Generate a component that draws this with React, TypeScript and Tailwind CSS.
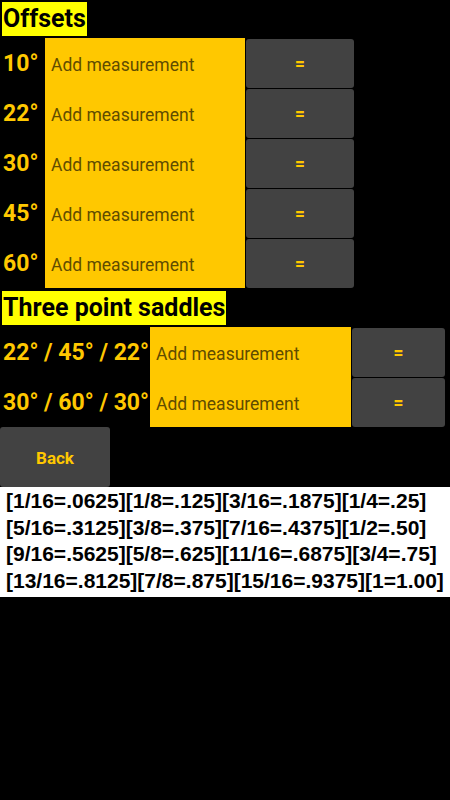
import React from 'react';

const offsets = ['10°', '22°', '30°', '45°', '60°'];
const saddles = ['22° / 45° / 22°', '30° / 60° / 30°'];

const fractions = [
  '[1/16=.0625][1/8=.125][3/16=.1875][1/4=.25]',
  '[5/16=.3125][3/8=.375][7/16=.4375][1/2=.50]',
  '[9/16=.5625][5/8=.625][11/16=.6875][3/4=.75]',
  '[13/16=.8125][7/8=.875][15/16=.9375][1=1.00]',
];

const Row = ({ label, labelW, inputW, btnW }: { label: string; labelW: string; inputW: string; btnW: string }) => (
  <div className="flex h-[50px] items-stretch">
    <div className={`${labelW} flex items-center pt-[3px] pl-[3px] text-[23px] font-bold text-[#ffc800] whitespace-nowrap`}>{label}</div>
    <input
      placeholder="Add measurement"
      className={`${inputW} h-full bg-[#ffc800] pt-[3px] pl-[6px] text-[17.5px] text-black outline-none placeholder:text-[#5f4c00]`}
    />
    <button className={`${btnW} ml-[1px] my-[0.5px] rounded-[3px] bg-[#424242] pt-[2px] text-[17px] font-black text-[#ffc800]`}>=</button>
  </div>
);

export default function App() {
  return (
    <div className="min-h-[800px] w-[450px] bg-black font-['Roboto',sans-serif]">
      <div className="pt-[2px] pl-[2px]">
        <span className="inline-block h-[34px] bg-[#ffff00] px-[1px] text-[25px] leading-[34px] font-bold text-black">Offsets</span>
      </div>
      <div className="mt-[2px]">
        {offsets.map((o) => (
          <Row key={o} label={o} labelW="w-[45px]" inputW="w-[200px]" btnW="w-[108px]" />
        ))}
      </div>
      <div className="pt-[3px] pl-[2px]">
        <span className="inline-block h-[34px] bg-[#ffff00] px-[1px] text-[25px] leading-[34px] font-bold text-black">Three point saddles</span>
      </div>
      <div className="mt-[2px]">
        {saddles.map((s) => (
          <Row key={s} label={s} labelW="w-[150px]" inputW="w-[201px]" btnW="w-[93px]" />
        ))}
      </div>
      <button className="h-[60px] w-[110px] rounded-[3px] bg-[#424242] pt-[3px] text-[17px] font-bold text-[#ffc800]">Back</button>
      <div className="w-[450px] bg-white pt-[1px] pb-[3px] pl-[6px] font-['Liberation_Sans',sans-serif] text-[21px] leading-[26.5px] font-bold text-black whitespace-nowrap">
        {fractions.map((f) => (
          <div key={f}>{f}</div>
        ))}
      </div>
    </div>
  );
}
